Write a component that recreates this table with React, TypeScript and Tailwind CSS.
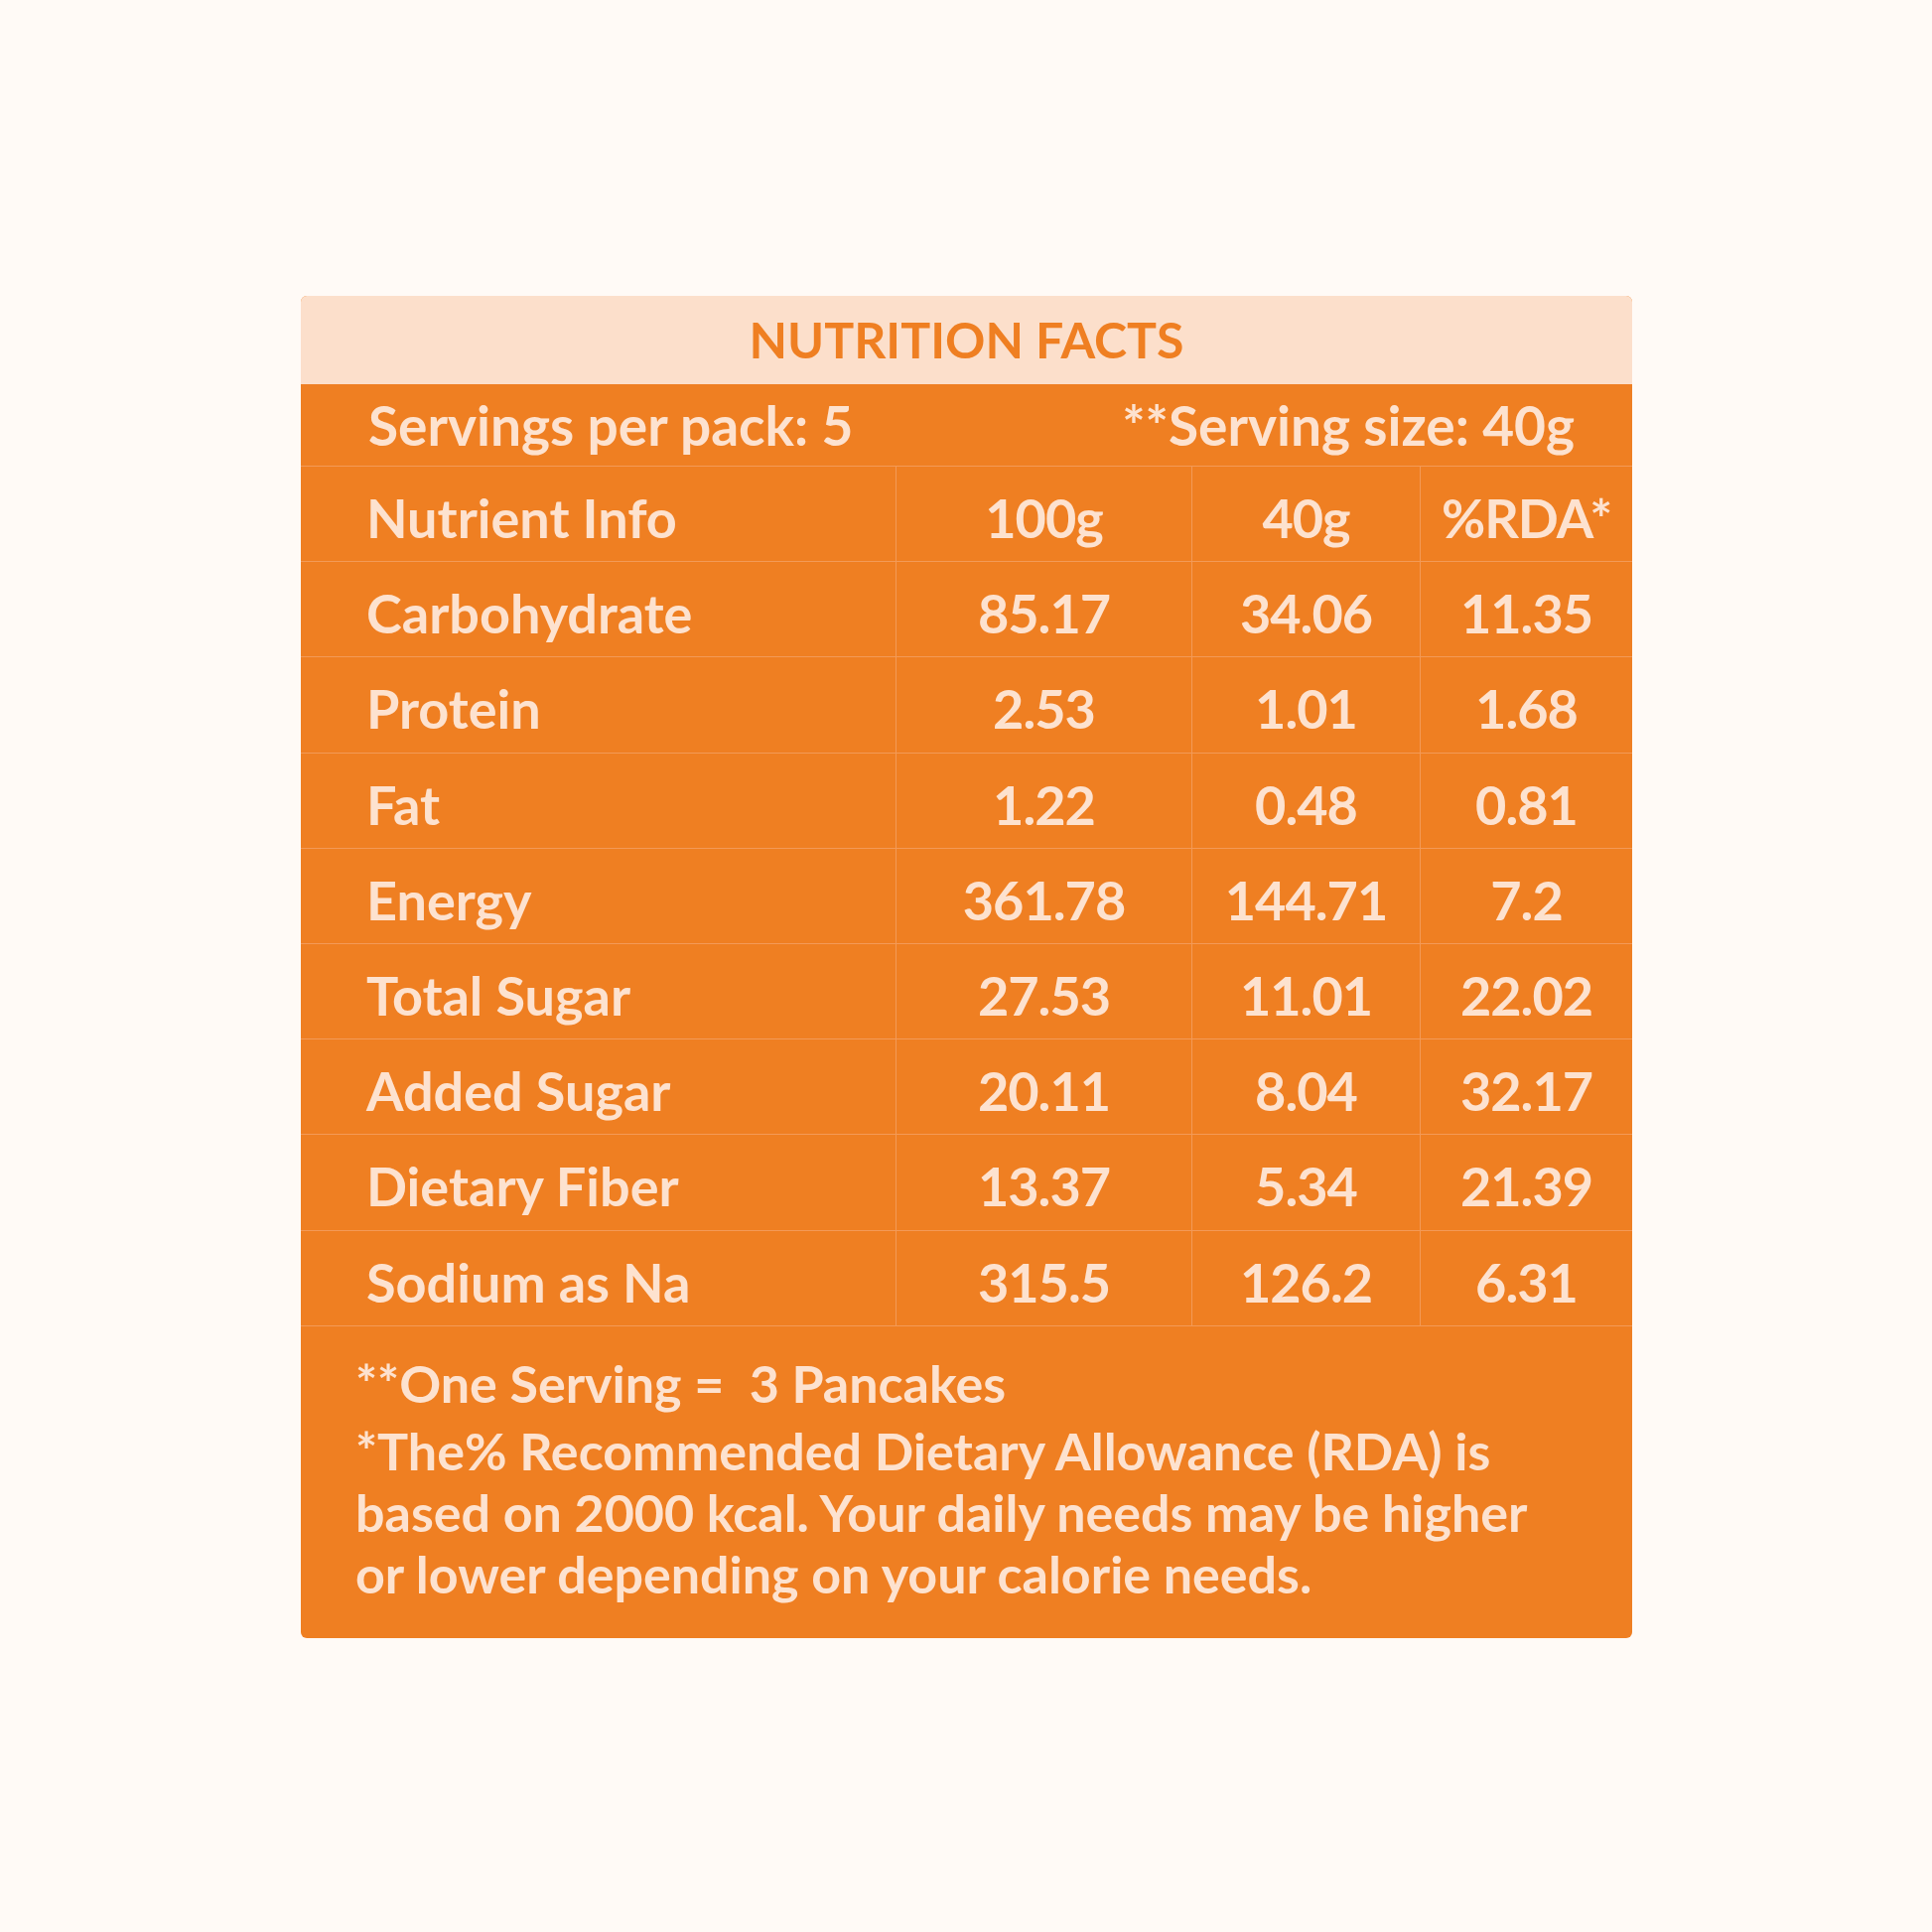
const rows: [string, string, string, string][] = [
  ['Carbohydrate', '85.17', '34.06', '11.35'],
  ['Protein', '2.53', '1.01', '1.68'],
  ['Fat', '1.22', '0.48', '0.81'],
  ['Energy', '361.78', '144.71', '7.2'],
  ['Total Sugar', '27.53', '11.01', '22.02'],
  ['Added Sugar', '20.11', '8.04', '32.17'],
  ['Dietary Fiber', '13.37', '5.34', '21.39'],
  ['Sodium as Na', '315.5', '126.2', '6.31'],
];

function Row({ cells }: { cells: [string, string, string, string] }) {
  return (
    <div className="grid h-[96.2px] grid-cols-[599px_298px_230px_214px] border-b border-[#f39a57]">
      <div className="flex items-center pl-[66px] pt-[8px]">{cells[0]}</div>
      <div className="flex items-center justify-center border-l border-[#f39a57] pt-[8px] tracking-[-1px]">{cells[1]}</div>
      <div className="flex items-center justify-center border-l border-[#f39a57] pt-[8px] tracking-[-1px]">{cells[2]}</div>
      <div className="flex items-center justify-center border-l border-[#f39a57] pt-[8px] tracking-[-1px]">{cells[3]}</div>
    </div>
  );
}

export default function App() {
  return (
    <div className="h-[1946px] w-[1946px] bg-[#fffaf6] pl-[303px] pt-[298px] font-['Lato',sans-serif]">
      <div className="w-[1341px] overflow-hidden rounded-[6px] bg-[#ef7f22] font-bold text-[#fde2cf]">
        <div className="flex h-[89px] items-center justify-center bg-[#fcdfcb] text-[50px] text-[#ef7f22]">
          NUTRITION FACTS
        </div>
        <div className="flex h-[83px] items-center justify-between border-b border-[#f39a57] pl-[68px] pr-[58px] text-[55px]">
          <span>Servings per pack: 5</span>
          <span>**Serving size: 40g</span>
        </div>
        <div className="text-[54px]">
          <Row cells={['Nutrient Info', '100g', '40g', '%RDA*']} />
          {rows.map((r) => (
            <Row key={r[0]} cells={r} />
          ))}
        </div>
        <div className="px-[55px] pb-[34px] pt-[26px] text-[52px] leading-[62px]">
          <p className="mb-[6px]">**One Serving =&nbsp; 3 Pancakes</p>
          <p>
            *The% Recommended Dietary Allowance (RDA) is
            <br />
            based on 2000 kcal. Your daily needs may be higher
            <br />
            or lower depending on your calorie needs.
          </p>
        </div>
      </div>
    </div>
  );
}
